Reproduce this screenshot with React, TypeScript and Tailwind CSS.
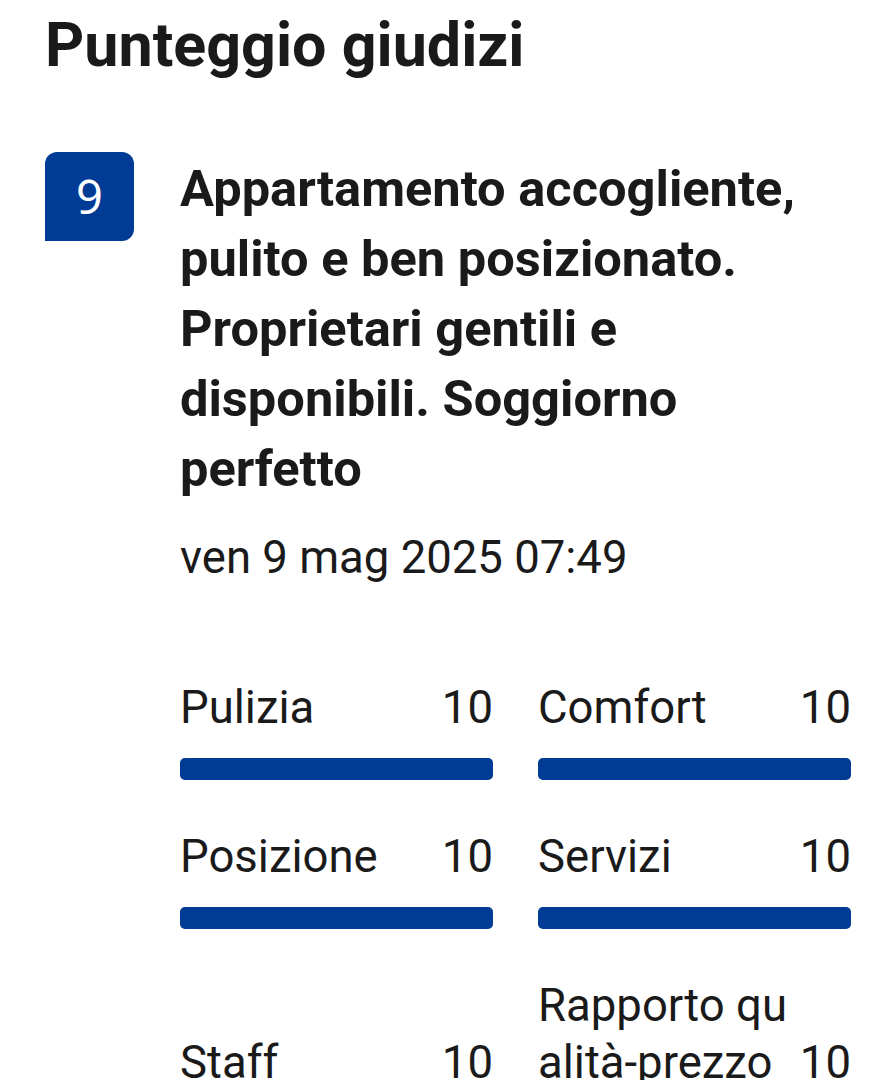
import * as React from "react";

type Score = { label: string; value: number };

const scores: Score[] = [
  { label: "Pulizia", value: 10 },
  { label: "Comfort", value: 10 },
  { label: "Posizione", value: 10 },
  { label: "Servizi", value: 10 },
  { label: "Staff", value: 10 },
  { label: "Rapporto qualità-prezzo", value: 10 },
];

function ScoreBar({ label, value }: Score) {
  return (
    <div className="flex flex-col">
      <div className="flex items-end justify-between gap-3">
        <span className="min-w-0 flex-1 break-all">{label}</span>
        <span className="shrink-0">{value}</span>
      </div>
      <div className="mt-[22px] h-[22px] w-full rounded-[5px] bg-[#e7e7e7]">
        <div
          className="h-full rounded-[5px] bg-[#003b95]"
          style={{ width: `${value * 10}%` }}
        />
      </div>
    </div>
  );
}

export default function App() {
  return (
    <div
      className="min-h-screen bg-white px-[45px] text-[#1a1a1a]"
      style={{ fontFamily: "Roboto, 'Liberation Sans', sans-serif" }}
    >
      <h1 className="pt-[10px] text-[61px] font-bold leading-[70px]">
        Punteggio giudizi
      </h1>

      <div className="mt-[72px] flex items-start gap-[46px]">
        <div
          className="flex h-[89px] w-[89px] shrink-0 items-center justify-center rounded-t-[12px] rounded-br-[12px] bg-[#003b95] text-[47px] text-white"
          style={{ fontFamily: "'Noto Sans', 'Open Sans', sans-serif" }}
        >
          9
        </div>

        <div className="min-w-0 flex-1">
          <h2 className="mt-[2px] text-[50.6px] font-bold leading-[70px]">
            Appartamento accogliente, pulito e ben posizionato. Proprietari
            gentili e disponibili. Soggiorno perfetto
          </h2>
          <p className="mt-[25px] text-[45.5px] leading-[57px]">
            ven 9 mag 2025 07:49
          </p>

          <div className="mt-[93px] grid grid-cols-2 items-end gap-x-[45px] gap-y-[48px] text-[45.5px] leading-[57px]">
            {scores.map((s) => (
              <ScoreBar key={s.label} label={s.label} value={s.value} />
            ))}
          </div>
        </div>
      </div>
    </div>
  );
}
